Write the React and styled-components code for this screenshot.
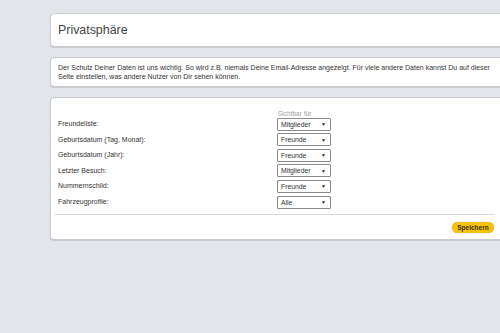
import React from "react";
import styled, { createGlobalStyle } from "styled-components";

const GlobalStyle = createGlobalStyle`
  html, body {
    margin: 0;
    padding: 0;
    background: #e2e5e9;
    overflow: hidden;
  }
  body {
    font-family: "Liberation Sans", Arial, sans-serif;
    color: #333;
  }
`;

const rows = [
  { label: "Freundeliste:", value: "Mitglieder" },
  { label: "Geburtsdatum (Tag, Monat):", value: "Freunde" },
  { label: "Geburtsdatum (Jahr):", value: "Freunde" },
  { label: "Letzter Besuch:", value: "Mitglieder" },
  { label: "Nummernschild:", value: "Freunde" },
  { label: "Fahrzeugprofile:", value: "Alle" },
];

function App() {
  return (
    <Page>
      <GlobalStyle />
      <Card>
        <Title>Privatsphäre</Title>
      </Card>
      <Card>
        <Intro>
          Der Schutz Deiner Daten ist uns wichtig. So wird z.B. niemals Deine
          Email-Adresse angezeigt. Für viele andere Daten kannst Du auf dieser
          <br />
          Seite einstellen, was andere Nutzer von Dir sehen können.
        </Intro>
      </Card>
      <Card>
        <Form>
          <span />
          <Hint>Sichtbar für</Hint>
          {rows.map((r) => (
            <React.Fragment key={r.label}>
              <Label>{r.label}</Label>
              <Select>
                <span>{r.value}</span>
                <Arrow>▼</Arrow>
              </Select>
            </React.Fragment>
          ))}
        </Form>
        <Divider />
        <Actions>
          <SaveButton>Speichern</SaveButton>
        </Actions>
      </Card>
    </Page>
  );
}

const Page = styled.div`
  width: 500px;
  height: 333px;
  box-sizing: border-box;
  padding: 13px 0 0 50px;
  display: flex;
  flex-direction: column;
  gap: 10px;
`;

const Card = styled.div`
  background: #fff;
  border: 1px solid #c8ccd1;
  border-radius: 4px;
  box-shadow: 0 1px 1px rgba(0, 0, 0, 0.12);
  margin-right: -6px;
  padding: 0 10px 0 6px;
`;

const Title = styled.h1`
  margin: 0;
  height: 32px;
  display: flex;
  align-items: center;
  font-size: 12.4px;
  font-weight: normal;
  color: #444;
  padding-left: 1px;
`;

const Intro = styled.p`
  margin: 0;
  padding: 5px 0 5px 1px;
  font-size: 7px;
  line-height: 9px;
  color: #333;
  white-space: nowrap;
`;

const Form = styled.div`
  display: grid;
  grid-template-columns: 219px 54px;
  grid-auto-rows: 13px;
  row-gap: 2.6px;
  padding: 4px 0 0 1px;
  align-items: center;
`;

const Hint = styled.span`
  font-size: 6.5px;
  color: #a0a0a0;
  padding-left: 1px;
  align-self: end;
  margin-bottom: -2px;
`;

const Label = styled.span`
  font-size: 7px;
  color: #333;
  margin-top: -1px;
`;

const Select = styled.div`
  box-sizing: border-box;
  height: 13px;
  border: 1px solid #8a8a8a;
  border-radius: 1px;
  display: flex;
  align-items: center;
  justify-content: space-between;
  padding: 0 4px 0 3px;
  font-size: 6.8px;
  color: #333;
  background: #fff;
`;

const Arrow = styled.span`
  font-size: 5px;
  color: #222;
`;

const Divider = styled.div`
  height: 1px;
  background: #d6d8db;
  margin: 5px 0 0 -2px;
`;

const Actions = styled.div`
  display: flex;
  justify-content: flex-end;
  padding: 7px 1px 6px 0;
`;

const SaveButton = styled.button`
  width: 42px;
  height: 11px;
  border: none;
  border-radius: 6px;
  background: #f4c20d;
  color: #3a2e00;
  font-family: "Liberation Sans", Arial, sans-serif;
  font-weight: bold;
  font-size: 6.5px;
  padding: 0;
  box-shadow: 0 0 1px rgba(120, 90, 0, 0.5);
`;

export default App;
